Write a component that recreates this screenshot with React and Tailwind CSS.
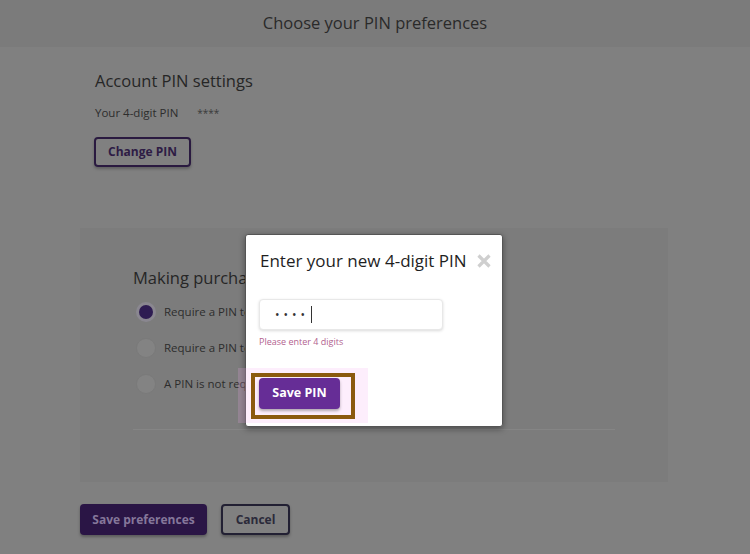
import React from "react";

const font = { fontFamily: '"Open Sans", "Liberation Sans", sans-serif' };

function Radio({ checked }) {
  return checked ? (
    <span className="flex h-[20px] w-[20px] items-center justify-center rounded-full bg-[#8a8790]">
      <span className="h-[14px] w-[14px] rounded-full bg-[#2e1c52]" />
    </span>
  ) : (
    <span className="h-[20px] w-[20px] rounded-full border border-[#7a7a7a] bg-[#838383]" />
  );
}

export default function App() {
  return (
    <div className="relative h-[554px] w-[750px] overflow-hidden bg-[#808080]" style={font}>
      <div className="flex h-[47px] items-center justify-center bg-[#7b7b7b] text-[16.5px] text-[#2a2a2a]">
        Choose your PIN preferences
      </div>

      <div className="pl-[95px]">
        <div className="mt-[22px] text-[16.5px] leading-[24px] text-[#262626]">Account PIN settings</div>
        <div className="mt-[12px] flex items-center text-[11.5px] leading-[16px] text-[#2d2d2d]">
          <span>Your 4-digit PIN</span>
          <span className="ml-[19px] text-[10px] text-[#3a3a3a]">****</span>
        </div>
        <button className="ml-[-1px] mt-[16px] flex h-[30px] w-[97px] items-center justify-center rounded-[4px] border-2 border-[#2a1a40] text-[12px] font-bold text-[#2e1c45] shadow-[0_2px_3px_rgba(0,0,0,0.25)]">
          Change PIN
        </button>
      </div>

      <div className="ml-[80px] mt-[61px] h-[254px] w-[588px] bg-[#7c7c7c] pl-[53px] pr-[53px] pt-[38px]">
        <div className="text-[16.5px] leading-[24px] text-[#262626]">Making purchases from the Channel Store</div>
        <div className="mt-[12px] flex flex-col gap-[16px] text-[11.5px] text-[#2d2d2d]">
          <div className="flex h-[20px] items-center gap-[8px] pl-[3px]">
            <Radio checked />
            <span>Require a PIN to make purchases</span>
          </div>
          <div className="flex h-[20px] items-center gap-[8px] pl-[3px]">
            <Radio />
            <span>Require a PIN to make purchases and add channels</span>
          </div>
          <div className="flex h-[20px] items-center gap-[8px] pl-[3px]">
            <Radio />
            <span>A PIN is not required to make purchases or add free channels.</span>
          </div>
        </div>
        <div className="mt-[35px] h-px w-full bg-[#858585]" />
      </div>

      <div className="ml-[80px] mt-[22px] flex gap-[14px]">
        <button className="flex h-[31px] w-[127px] items-center justify-center rounded-[4px] bg-[#2a1545] text-[12px] font-bold text-[#85779a] shadow-[0_2px_3px_rgba(0,0,0,0.3)]">
          Save preferences
        </button>
        <button className="flex h-[31px] w-[69px] items-center justify-center rounded-[4px] border-2 border-[#222033] bg-[#808080] text-[12px] font-bold text-[#2b2a3a] shadow-[0_2px_3px_rgba(0,0,0,0.3)]">
          Cancel
        </button>
      </div>

      {/* modal */}
      <div className="absolute left-[245px] top-[234px] h-[193px] w-[258px] rounded-[3px] border border-[#555] bg-white shadow-[0_2px_6px_rgba(0,0,0,0.4)]">
        <div className="flex items-center justify-between pl-[14px] pr-[10px] pt-[14px]">
          <span className="text-[17px] leading-[24px] text-[#1f1f1f]">Enter your new 4-digit PIN</span>
          <svg width="16" height="16" viewBox="0 0 16 16">
            <path d="M2.5 2.5 L13.5 13.5 M13.5 2.5 L2.5 13.5" stroke="#cfcfcf" strokeWidth="3.2" strokeLinecap="butt" />
          </svg>
        </div>
        <div className="ml-[13px] mt-[26px] flex h-[31px] w-[184px] items-center rounded-[4px] border border-[#e8e8e8] bg-white pl-[15px] shadow-[0_1px_3px_rgba(0,0,0,0.15)]">
          <span className="text-[12px] tracking-[4px] text-[#333]">••••</span>
          <span className="ml-[2px] h-[17px] w-px bg-[#333]" />
        </div>
        <div className="ml-[13px] mt-[6px] text-[9px] leading-[12px] text-[#b2628f]">Please enter 4 digits</div>
      </div>

      {/* pink highlight */}
      <div className="absolute left-[238px] top-[368px] h-[55px] w-[130px] bg-[rgba(245,170,240,0.2)]" />

      {/* highlighted save button */}
      <div className="absolute left-[251px] top-[373px] h-[46px] w-[104px] border-4 border-[#8b5a0e]">
        <button className="ml-[4px] mt-[1px] flex h-[31px] w-[81px] items-center justify-center rounded-[4px] bg-[#662d96] text-[12.5px] font-bold text-white shadow-[0_2px_3px_rgba(0,0,0,0.3)]">
          Save PIN
        </button>
      </div>
    </div>
  );
}
